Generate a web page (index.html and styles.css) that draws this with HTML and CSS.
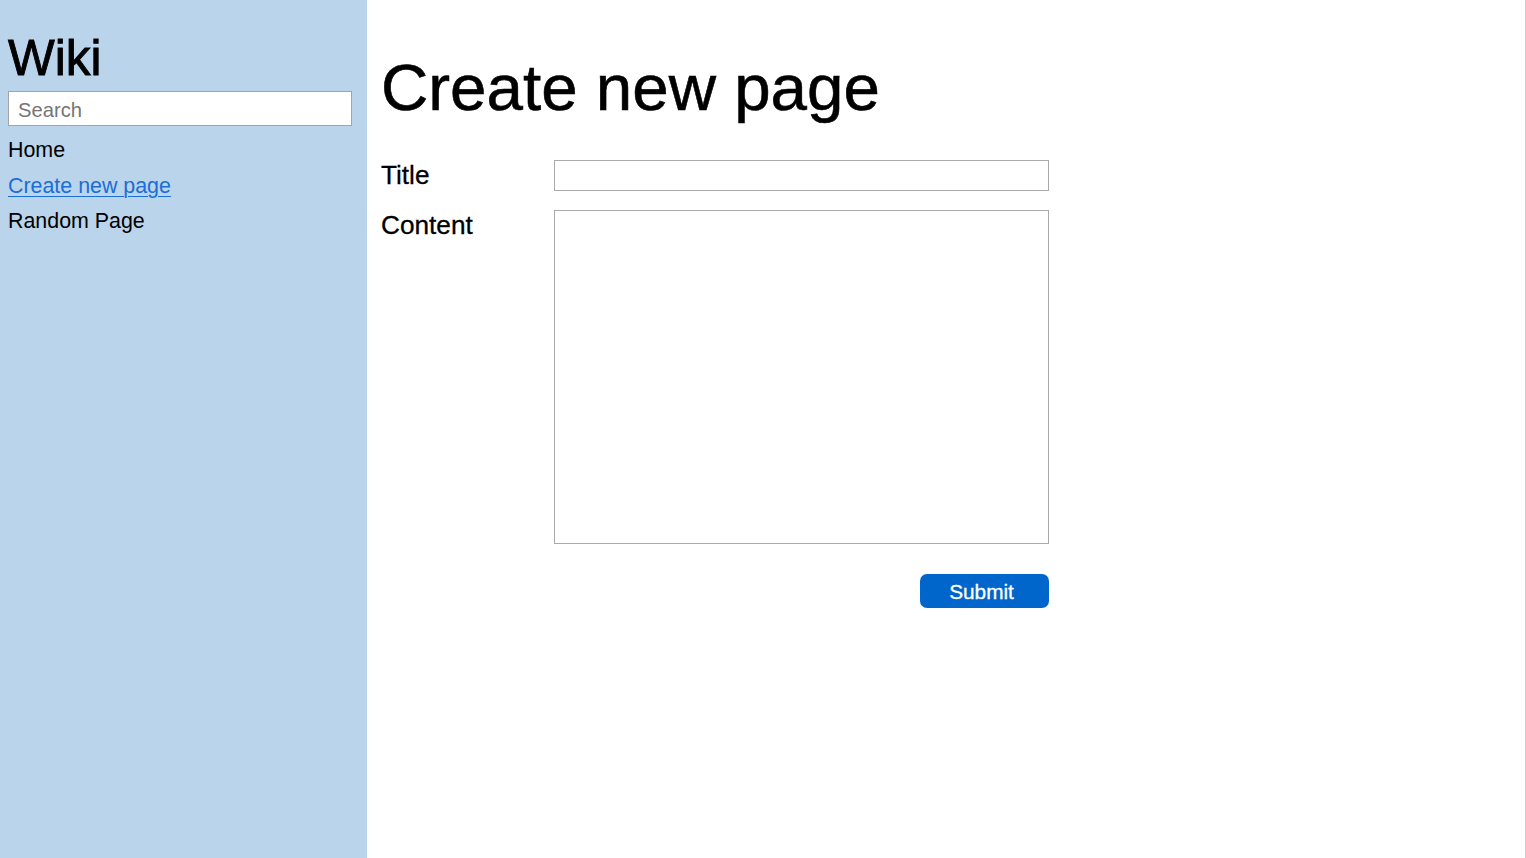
FILE: index.html
```html
<!DOCTYPE html>
<html lang="en">
<head>
<meta charset="utf-8">
<title>Create new page - Wiki</title>
<link rel="stylesheet" href="styles.css">
</head>
<body>
<div class="layout">
  <aside class="sidebar">
    <h2 class="brand">Wiki</h2>
    <input class="search" type="text" placeholder="Search">
    <nav class="nav">
      <a class="nav-item" href="#">Home</a>
      <a class="nav-item nav-active" href="#">Create new page</a>
      <a class="nav-item" href="#">Random Page</a>
    </nav>
  </aside>
  <main class="main">
    <h1 class="page-title">Create new page</h1>
    <form class="form">
      <label class="label" for="title">Title</label>
      <input class="field" id="title" type="text">
      <label class="label" for="content">Content</label>
      <textarea class="field area" id="content"></textarea>
      <div class="actions">
        <button class="submit" type="button">Submit</button>
      </div>
    </form>
  </main>
</div>
</body>
</html>
```
FILE: styles.css
```css
html, body {
  margin: 0;
  padding: 0;
  height: 100%;
}
body {
  font-family: "Liberation Sans", Arial, Helvetica, sans-serif;
  color: #000;
  background: #fff;
}
.layout {
  display: flex;
  height: 100vh;
}
.sidebar {
  width: 367px;
  flex: none;
  box-sizing: border-box;
  background: #bad4ec;
  padding: 33px 15px 0 8px;
  display: flex;
  flex-direction: column;
}
.brand {
  margin: 0;
  font-size: 49.5px;
  line-height: 49px;
  font-weight: normal;
  -webkit-text-stroke: 0.9px #000;
}
.search {
  margin-top: 9px;
  height: 35px;
  box-sizing: border-box;
  width: 100%;
  border: 1px solid #a4a4a4;
  padding: 3px 9px 0;
  font-family: inherit;
  font-size: 20.2px;
  background: #fff;
  outline: none;
}
.search::placeholder {
  color: #757575;
}
.nav {
  margin-top: 7px;
  display: flex;
  flex-direction: column;
}
.nav-item {
  font-size: 21.4px;
  line-height: 35.5px;
  color: #000;
  text-decoration: none;
}
.nav-active {
  color: #1b6ed3;
  text-decoration: underline;
  text-underline-offset: 3px;
  text-decoration-thickness: 1px;
}
.main {
  flex: 1;
  border-right: 1px solid #cfcfcf;
  padding: 55px 0 0 14px;
}
.page-title {
  margin: 0;
  font-size: 65.5px;
  line-height: 65px;
  font-weight: normal;
  -webkit-text-stroke: 0.6px #000;
}
.form {
  margin-top: 40px;
  display: grid;
  grid-template-columns: 173px 495px;
  row-gap: 19px;
  align-items: start;
}
.label {
  font-size: 26.2px;
  line-height: 31px;
  -webkit-text-stroke: 0.3px #000;
}
.field {
  box-sizing: border-box;
  width: 495px;
  height: 31px;
  margin: 0;
  border: 1px solid #aaaaaa;
  background: #fff;
  font-family: inherit;
  font-size: 20px;
  padding: 2px 6px;
  outline: none;
}
.area {
  height: 334px;
  resize: none;
  display: block;
}
.actions {
  grid-column: 2;
  display: flex;
  justify-content: flex-end;
  margin-top: 11px;
}
.submit {
  width: 129px;
  height: 34px;
  border: none;
  border-radius: 7px;
  background: #0066cc;
  color: #fff;
  font-family: inherit;
  font-size: 20.8px;
  -webkit-text-stroke: 0.3px #fff;
  padding: 1px 6px 0 0;
  cursor: pointer;
}
```
